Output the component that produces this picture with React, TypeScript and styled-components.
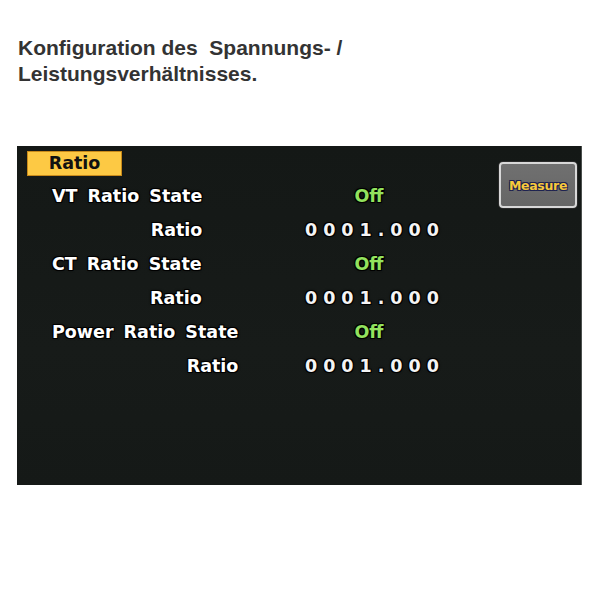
import React from "react";
import styled, { createGlobalStyle } from "styled-components";

const Global = createGlobalStyle`
  html, body { margin: 0; padding: 0; background: #ffffff; }
  body { font-family: "Liberation Sans", Arial, sans-serif; }
`;

const Page = styled.div`
  width: 600px;
  height: 600px;
  padding: 35px 0 0 17px;
  box-sizing: border-box;
`;

const Title = styled.h1`
  margin: 0 0 59px 1px;
  font-family: "Liberation Sans", Arial, sans-serif;
  font-weight: 700;
  font-size: 21px;
  line-height: 26px;
  color: #333333;
  white-space: pre;
`;

const Screen = styled.div`
  width: 565px;
  height: 339px;
  box-sizing: border-box;
  background: linear-gradient(180deg, #141816 0%, #171b19 60%, #151917 100%);
  border-right: 1px solid #4a4f4c;
  display: flex;
  justify-content: space-between;
  padding: 5px 4px 0 10px;
  font-family: "DejaVu Sans", Verdana, sans-serif;
`;

const Main = styled.div`
  display: flex;
  flex-direction: column;
`;

const outline = `
  text-shadow: 1px 1px 0 #000, -1px -1px 0 #000, 1px -1px 0 #000, -1px 1px 0 #000, 0 0 3px #000;
`;

const Tab = styled.div`
  width: 95px;
  height: 25px;
  box-sizing: border-box;
  background: #fdc944;
  border: 1px solid #c98a1a;
  color: #111;
  font-weight: 700;
  font-size: 17.5px;
  line-height: 23px;
  text-align: center;
`;

const Rows = styled.div`
  display: flex;
  flex-direction: column;
  padding: 3px 0 0 25px;
`;

const Block = styled.div`
  display: grid;
  grid-template-columns: 247px 140px;
  grid-template-rows: 34px 34px;
  align-items: center;
`;

const LabelGroup = styled.div`
  grid-row: 1 / span 2;
  grid-column: 1;
  display: grid;
  grid-template-rows: 34px 34px;
  width: max-content;
  align-items: center;
  align-self: stretch;
`;

const Label = styled.span<{ $sub?: boolean }>`
  justify-self: ${(p) => (p.$sub ? "end" : "start")};
  color: #ffffff;
  font-weight: 700;
  font-size: 17.5px;
  word-spacing: 4px;
  ${outline}
`;

const Value = styled.span<{ $state?: boolean }>`
  grid-column: 2;
  text-align: center;
  font-weight: 700;
  font-size: 17.5px;
  color: ${(p) => (p.$state ? "#93e25e" : "#f4f4f4")};
  letter-spacing: ${(p) => (p.$state ? "0" : "6px")};
  padding-left: ${(p) => (p.$state ? "0" : "6px")};
  ${outline}
`;

const Side = styled.div`
  padding-top: 11px;
`;

const MeasureButton = styled.button`
  width: 78px;
  height: 46px;
  box-sizing: border-box;
  background: linear-gradient(180deg, #707070 0%, #666666 100%);
  border: 2px solid #d8d8d8;
  border-radius: 4px;
  box-shadow: 0 0 0 1px #2a2a2a;
  color: #f7c93c;
  font-family: "DejaVu Sans", Verdana, sans-serif;
  font-weight: 700;
  font-size: 12.5px;
  letter-spacing: -0.3px;
  padding: 0;
  text-shadow: 1px 1px 0 #1d2250, -1px -1px 0 #1d2250, 1px -1px 0 #1d2250, -1px 1px 0 #1d2250;
`;

const data = [
  { label: "VT Ratio State" },
  { label: "CT Ratio State" },
  { label: "Power Ratio State" },
];

export default function App() {
  return (
    <>
      <Global />
      <Page>
        <Title>{"Konfiguration des  Spannungs- /\nLeistungsverhältnisses."}</Title>
        <Screen>
          <Main>
            <Tab>Ratio</Tab>
            <Rows>
              {data.map((d) => (
                <Block key={d.label}>
                  <LabelGroup>
                    <Label>{d.label}</Label>
                    <Label $sub>Ratio</Label>
                  </LabelGroup>
                  <Value $state>Off</Value>
                  <Value>0001.000</Value>
                </Block>
              ))}
            </Rows>
          </Main>
          <Side>
            <MeasureButton>Measure</MeasureButton>
          </Side>
        </Screen>
      </Page>
    </>
  );
}
